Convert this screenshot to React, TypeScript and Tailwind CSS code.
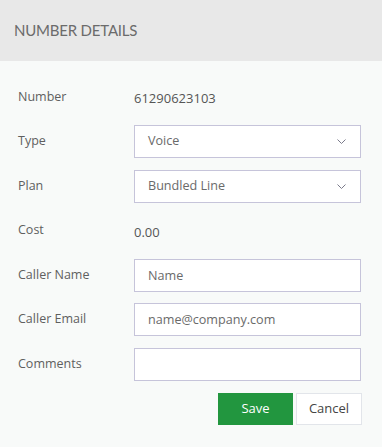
import React from 'react';

const Chevron: React.FC = () => (
  <svg width="9" height="5" viewBox="0 0 9 5" fill="none" className="shrink-0">
    <path d="M0.5 0.5L4.5 4.5L8.5 0.5" stroke="#7a7a8a" strokeWidth="1" />
  </svg>
);

const Row: React.FC<{ label: string; children: React.ReactNode }> = ({ label, children }) => (
  <div className="flex items-center h-[33px]">
    <div className="w-[116px] shrink-0 text-[12.5px] text-[#5f5f5f]">{label}</div>
    <div className="flex-1 min-w-0">{children}</div>
  </div>
);

const boxCls =
  'w-[227px] h-[33px] border border-[#c6c4da] bg-white px-[13px] flex items-center text-[12.6px] text-[#6a6a6a]';

const App: React.FC = () => {
  return (
    <div className="w-[382px] h-[447px] bg-[#f8faf9]" style={{ fontFamily: '"Open Sans", sans-serif' }}>
      <div className="h-[61px] bg-[#e8e8e8] flex items-center px-[14px]">
        <h2 className="text-[15px] text-[#6b6b6b] tracking-[-0.2px]" style={{ fontFamily: 'Lato, sans-serif' }}>
          NUMBER DETAILS
        </h2>
      </div>

      <div className="pl-[18px] pt-[19.5px] flex flex-col gap-[11.5px]">
        <Row label="Number">
          <span className="text-[13px] text-[#555]">61290623103</span>
        </Row>
        <Row label="Type">
          <div className={`${boxCls} justify-between pr-[14px]`}>
            <span>Voice</span>
            <Chevron />
          </div>
        </Row>
        <Row label="Plan">
          <div className={`${boxCls} justify-between pr-[14px]`}>
            <span>Bundled Line</span>
            <Chevron />
          </div>
        </Row>
        <Row label="Cost">
          <span className="text-[13px] text-[#555]">0.00</span>
        </Row>
        <Row label="Caller Name">
          <input className={`${boxCls} outline-none placeholder:text-[#6a6a6a]`} placeholder="Name" />
        </Row>
        <Row label="Caller Email">
          <input className={`${boxCls} outline-none placeholder:text-[#6a6a6a]`} placeholder="name@company.com" />
        </Row>
        <Row label="Comments">
          <input className={`${boxCls} outline-none`} />
        </Row>
        <div className="flex justify-end gap-[3px] pr-[20px] pt-[1px]">
          <button className="w-[75px] h-[32px] bg-[#22963f] text-white text-[13px] font-medium">Save</button>
          <button className="w-[66px] h-[32px] bg-white border border-[#e2e5ea] text-[13px] text-[#444]">Cancel</button>
        </div>
      </div>
    </div>
  );
};

export default App;
